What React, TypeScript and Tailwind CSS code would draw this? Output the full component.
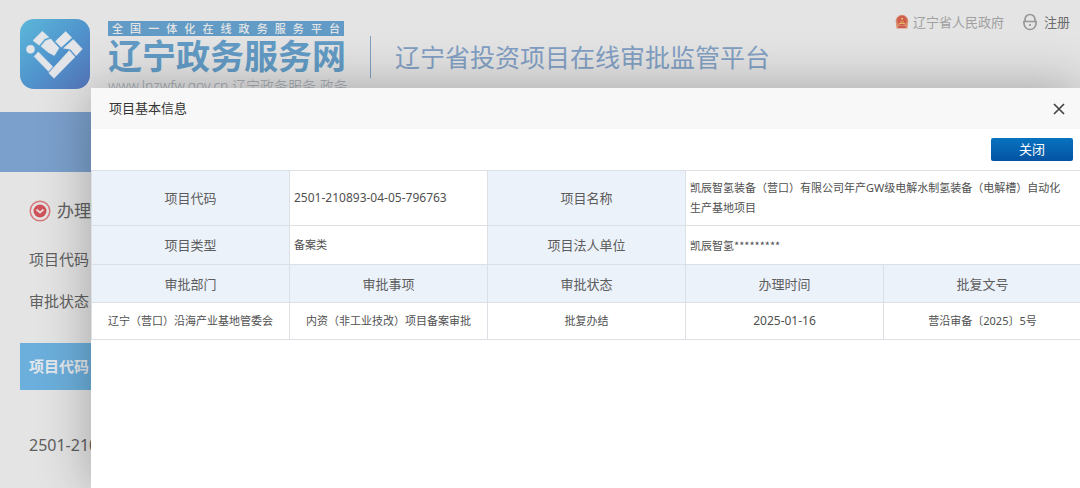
import React from "react";

const LABEL = "border border-[#dcdfe4] bg-[#ecf2fa] px-1 text-center text-[13px] leading-5 font-normal text-[#5c5c5c]";
const CELL = "border border-[#dcdfe4] px-1 leading-5 text-[#505050]";

const APPROVAL = [
  { name: "审批部门", value: "辽宁（营口）沿海产业基地管委会", size: "text-[11px]" },
  { name: "审批事项", value: "内资（非工业技改）项目备案审批", size: "text-[11px]" },
  { name: "审批状态", value: "批复办结", size: "text-[11px]" },
  { name: "办理时间", value: "2025-01-16", size: "text-xs" },
  { name: "批复文号", value: "营沿审备〔2025〕5号", size: "text-[11px]" },
];

function LogoMark() {
  return (
    <svg viewBox="0 0 70 70" className="size-[70px] shrink-0" aria-hidden="true">
      <defs>
        <linearGradient id="mark" x1="0" y1="0" x2="1" y2="1">
          <stop offset="0" stopColor="#5cb8da" />
          <stop offset="0.5" stopColor="#5095cd" />
          <stop offset="1" stopColor="#5677bd" />
        </linearGradient>
      </defs>
      <rect width="70" height="70" rx="14" fill="url(#mark)" />
      <g fill="#e3e5e8" stroke="#e3e5e8" strokeWidth="0.6" strokeLinejoin="round">
        <circle cx="10.500" cy="30.300" r="4" />
        <path d="M13 21.500L22.300 12.300L28.800 18.300L24.500 19.800L19.300 26.200Z" />
        <path d="M21 27.300L25.500 21.700L30.700 20L39 29L34.300 36.500L28.500 33.500Z" />
        <path d="M45.700 12.500L51.700 18.700L41.200 28.200L35.500 22.300Z" />
        <path d="M53.300 20.500L62.300 30L56 36.800L50.500 30.200L43.500 29.200Z" />
        <path d="M18.300 32.900L32.700 47.700L28.500 52.300L14.200 37.500Z" />
        <path d="M49.300 31.600L54.900 38L34 59.300L28.800 53.900Z" />
      </g>
    </svg>
  );
}

function Emblem() {
  return (
    <svg viewBox="0 0 14 16" className="h-4 w-3.5" aria-hidden="true">
      <path d="M7 .8a6.300 6.300 0 0 1 6 8.200l-.6 5.600H1.600L1 9A6.300 6.300 0 0 1 7 .8z" fill="#d98a68" />
      <circle cx="7" cy="6.500" r="4.800" fill="#cf5b50" />
      <path d="M4 9h6v1H4zM5 7.500h4v1H5zM7 3l.5 1.300h1.300l-1 .8.4 1.300L7 5.600l-1.200.8.400-1.300-1-.8h1.300z" fill="#e6b45e" />
      <path d="M4 12h6l1 2H3z" fill="#cf5b50" />
    </svg>
  );
}

function LockIcon() {
  return (
    <svg viewBox="0 0 16 18" className="h-[18px] w-4" fill="none" stroke="#989898" strokeWidth="1.700" aria-hidden="true">
      <path d="M3 8V6.500a5 5 0 0 1 10 0V8" />
      <path d="M1 8.500h14M2 8.500v2a6 6 0 0 0 12 0v-2M8 11v2" />
    </svg>
  );
}

export default function App() {
  return (
    <div className="relative min-h-screen overflow-hidden bg-[#e4e4e4] font-['Noto_Sans','Noto_Sans_CJK_SC',sans-serif] text-[#606060]">
      <header className="flex h-28 items-start justify-between pr-2.5 pl-5">
        <div className="flex items-start pt-[19px]">
          <LogoMark />
          <div className="ml-[18px] w-[236px] whitespace-nowrap">
            <p className="mt-0.5 h-[15px] bg-[#629bc5] px-1 text-[11px] leading-[15px] font-medium text-[#e4e4e4] [text-align-last:justify]">全国一体化在线政务服务平台</p>
            <p className="font-['Liberation_Sans','Noto_Sans_CJK_SC',sans-serif] text-[34px] leading-[42px] font-bold text-[#629bc5]">辽宁政务服务网</p>
            <p className="text-sm leading-4 font-light text-[#a0a7b0]">www.lnzwfw.gov.cn 辽宁政务服务 政务</p>
          </div>
          <h1 className="mt-[17px] ml-[26px] border-l border-[#7f9fc2] pl-6 text-[25px] leading-[42px] font-normal whitespace-nowrap text-[#829fc3]">辽宁省投资项目在线审批监管平台</h1>
        </div>
        <nav className="flex items-center pt-3 text-[13px] leading-5">
          <a href="#gov" className="flex items-center gap-1 text-[#a0a0a0]"><Emblem />辽宁省人民政府</a>
          <a href="#register" className="ml-[18px] flex items-center gap-1.5 text-[#6c6c6c]"><LockIcon />注册</a>
        </nav>
      </header>
      <div className="h-[60px] bg-[#7ba0cc]" />
      <main className="pl-[29px] text-[15px] whitespace-nowrap">
        <h2 className="flex items-center gap-1.5 pt-[27px] text-[17px] leading-6">
          <svg viewBox="0 0 22 22" className="size-[22px]" aria-hidden="true">
            <circle cx="11" cy="11" r="9.800" fill="none" stroke="#d9777b" strokeWidth="1.500" />
            <circle cx="11" cy="11" r="6.500" fill="#d0525a" />
            <path d="M7.500 9.500l3.500 3 3.500-3" fill="none" stroke="#e8dcdc" strokeWidth="1.800" />
          </svg>
          办理
        </h2>
        <p className="mt-6 leading-6">项目代码</p>
        <p className="mt-[18px] leading-6">审批状态</p>
        <p className="-ml-[9px] mt-[30px] bg-[#6cafdc] pl-[9px] leading-[47px] font-bold text-[#e4e8ec]">项目代码</p>
        <p className="mt-[43px] text-base leading-6">2501-210893</p>
      </main>

      <section role="dialog" aria-labelledby="dialog-title" className="absolute top-[88px] right-0 bottom-0 left-[91px] bg-white shadow-[1px_1px_50px_rgba(0,0,0,0.3)]">
        <div className="flex h-[41px] items-center justify-between bg-[#f8f8f8] pr-3.5 pl-[18px]">
          <h2 id="dialog-title" className="text-[13px] text-[#333]">项目基本信息</h2>
          <button type="button" aria-label="关闭窗口" className="p-px">
            <svg viewBox="0 0 12 12" className="size-3" fill="none" stroke="#444" strokeWidth="1.700" aria-hidden="true"><path d="M1 1l10 10M11 1L1 11" /></svg>
          </button>
        </div>
        <div className="flex justify-end pt-[9px] pr-[7px] pb-[9px]">
          <button type="button" className="h-[23px] w-[82px] rounded-xs bg-linear-to-b from-[#0873c0] to-[#0453a2] text-[13px] leading-[23px] text-white">关闭</button>
        </div>
        <div className="overflow-hidden">
          <table className="w-[calc(100%+2px)] table-fixed border-collapse">
            <tbody>
              <tr className="h-[55px]">
                <th scope="row" className={LABEL}>项目代码</th>
                <td className={`${CELL} text-xs`}>2501-210893-04-05-796763</td>
                <th scope="row" className={LABEL}>项目名称</th>
                <td colSpan={2} className={`${CELL} text-[11px]`}>凯辰智氢装备（营口）有限公司年产GW级电解水制氢装备（电解槽）自动化<br />生产基地项目</td>
              </tr>
              <tr className="h-[39px]">
                <th scope="row" className={LABEL}>项目类型</th>
                <td className={`${CELL} text-[11px]`}>备案类</td>
                <th scope="row" className={LABEL}>项目法人单位</th>
                <td colSpan={2} className={`${CELL} font-['Noto_Sans_CJK_SC',sans-serif] text-[11px]`}>凯辰智氢*********</td>
              </tr>
              <tr className="h-[38px]">
                {APPROVAL.map(({ name }) => (
                  <th key={name} scope="col" className={LABEL}>{name}</th>
                ))}
              </tr>
              <tr className="h-[37px]">
                {APPROVAL.map(({ name, value, size }) => (
                  <td key={name} className={`${CELL} ${size} text-center`}>{value}</td>
                ))}
              </tr>
            </tbody>
          </table>
        </div>
      </section>
    </div>
  );
}
